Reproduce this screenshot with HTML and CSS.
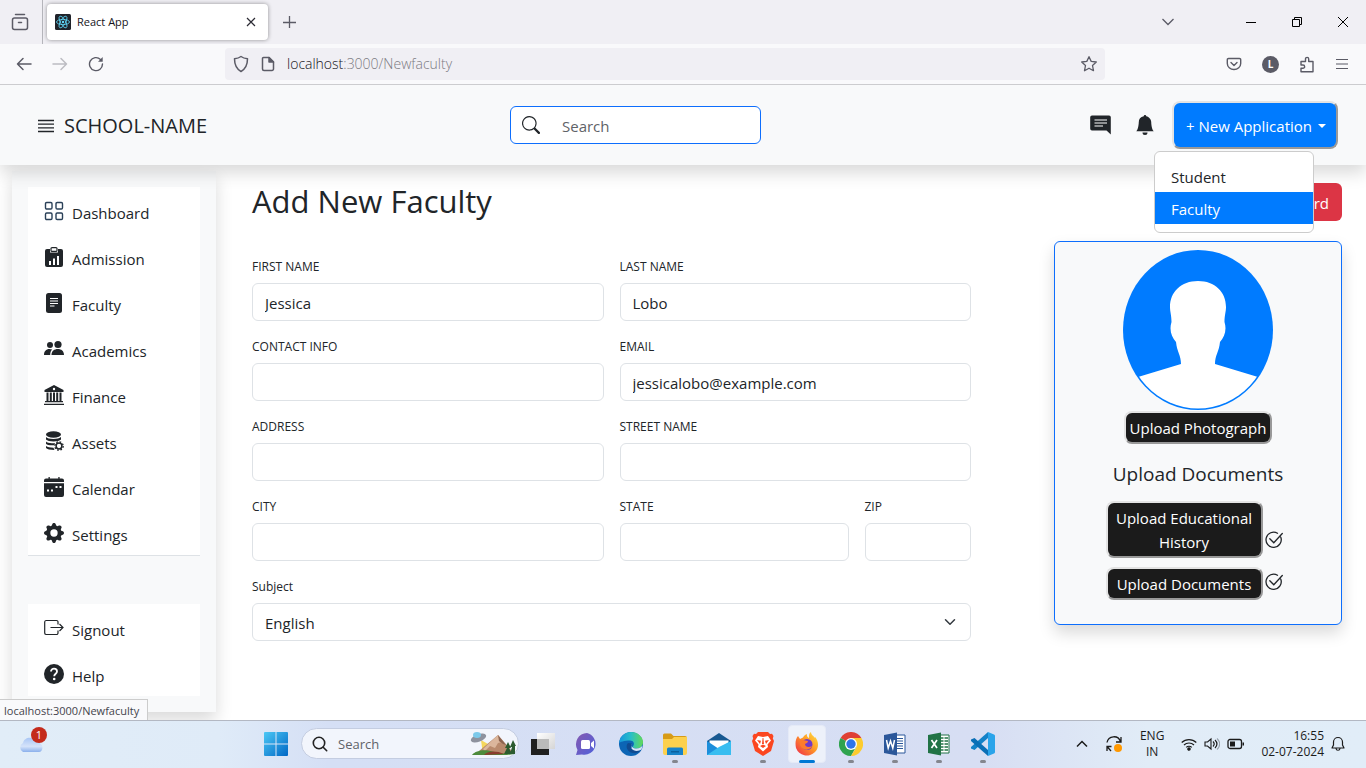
FILE: index.html
```html
<!DOCTYPE html>
<html lang="en">
<head>
<meta charset="utf-8">
<meta name="viewport" content="width=device-width, initial-scale=1">
<title>React App</title>
<link rel="stylesheet" href="styles.css">
</head>
<body>
<div class="tabbar">
  <button class="chrome-btn recent" aria-label="Recent browsing"><svg width="18" height="18" viewBox="0 0 18 18" fill="none" stroke="#5b5b66" stroke-width="1.500" stroke-linecap="round"><path d="M4.500 1.500h9"/><rect x="1.500" y="5" width="15" height="11.500" rx="2"/><path d="M7.500 9.500h3"/></svg></button>
  <div class="tab">
    <svg class="favicon" width="16" height="16" viewBox="0 0 16 16" fill="none" stroke="#61dafb" stroke-width=".8"><rect width="16" height="16" rx="1.500" fill="#20232a" stroke="none"/><ellipse cx="8" cy="8" rx="6.500" ry="2.600"/><ellipse cx="8" cy="8" rx="6.500" ry="2.600" transform="rotate(60 8 8)"/><ellipse cx="8" cy="8" rx="6.500" ry="2.600" transform="rotate(120 8 8)"/><circle cx="8" cy="8" r="1.200" fill="#61dafb" stroke="none"/></svg>
    <span class="tab-title">React App</span>
    <button class="chrome-btn tab-close" aria-label="Close tab"><svg width="10" height="10" viewBox="0 0 10 10" stroke="#2b2a33" stroke-width="1.200"><path d="M1 1l8 8M9 1l-8 8"/></svg></button>
  </div>
  <button class="chrome-btn" aria-label="New tab"><svg width="14" height="14" viewBox="0 0 14 14" stroke="#5b5b66" stroke-width="1.300"><path d="M7.500 1v12M1 7.500h13"/></svg></button>
  <div class="window-controls">
    <button class="chrome-btn list-tabs" aria-label="List all tabs"><svg width="14" height="14" viewBox="0 0 14 14" fill="none" stroke="#5b5b66" stroke-width="1.300"><path d="M1.500 4l5.500 5.500L12.500 4"/></svg></button>
    <button class="chrome-btn" aria-label="Minimize"><svg width="12" height="12" viewBox="0 0 12 12" stroke="#000"><path d="M1 6.500h10"/></svg></button>
    <button class="chrome-btn" aria-label="Restore"><svg width="12" height="12" viewBox="0 0 12 12" fill="none" stroke="#000"><path d="M1.500 3.500h7v7h-7zM3.500 3.500v-2h7v7h-2"/></svg></button>
    <button class="chrome-btn" aria-label="Close"><svg width="12" height="12" viewBox="0 0 12 12" stroke="#000"><path d="M1 1l10 10M11 1L1 11"/></svg></button>
  </div>
</div>
<div class="toolbar">
  <div class="nav-btns">
    <button class="chrome-btn" aria-label="Back"><svg width="16" height="16" viewBox="0 0 16 16" fill="none" stroke="#5b5b66" stroke-width="1.500" stroke-linecap="round" stroke-linejoin="round"><path d="M15 8H1.500M7 2.500L1.500 8 7 13.500"/></svg></button>
    <button class="chrome-btn" aria-label="Forward" disabled><svg width="16" height="16" viewBox="0 0 16 16" fill="none" stroke="#bcbcc2" stroke-width="1.500" stroke-linecap="round" stroke-linejoin="round"><path d="M1 8h13.500M9 2.500L14.500 8 9 13.500"/></svg></button>
    <button class="chrome-btn" aria-label="Reload"><svg width="16" height="16" viewBox="0 0 16 16" fill="none" stroke="#5b5b66" stroke-width="1.400" stroke-linecap="round"><path d="M14.500 8A6.500 6.500 0 1 1 12.500 3.400"/><path d="M14.700 1v4.700H10z" fill="#5b5b66" stroke="none"/></svg></button>
  </div>
  <div class="urlbar">
    <svg width="16" height="18" viewBox="0 0 16 18" fill="none" stroke="#5b5b66" stroke-width="1.500"><path d="M8 1.500c2 1.500 4 2 6.500 2.300C14.500 10 12.500 14 8 16.500 3.500 14 1.500 10 1.500 3.800 4 3.500 6 3 8 1.500z" stroke-linejoin="round"/></svg>
    <svg width="14" height="16" viewBox="0 0 14 16" fill="none" stroke="#5b5b66" stroke-width="1.500" stroke-linejoin="round"><path d="M2.500 1.500H8L12.500 6v7a1.500 1.500 0 0 1-1.500 1.500H3A1.500 1.500 0 0 1 1.500 13V2.500a1 1 0 0 1 1-1z"/><path d="M8 1.500V6h4.500z" fill="#5b5b66"/></svg>
    <span class="url">localhost<span class="url-rest">:3000/Newfaculty</span></span>
    <button class="chrome-btn star" aria-label="Bookmark"><svg width="18" height="18" viewBox="0 0 18 18" fill="none" stroke="#5b5b66" stroke-width="1.300" stroke-linejoin="round"><path d="M9 1.700l2.200 4.700 5.100.6-3.800 3.500 1 5.200L9 13.200l-4.500 2.500 1-5.200L1.700 7l5.100-.6z"/></svg></button>
  </div>
  <div class="tools">
    <button class="chrome-btn" aria-label="Save to Pocket"><svg width="16" height="16" viewBox="0 0 16 16" fill="none" stroke="#5b5b66" stroke-width="1.400" stroke-linecap="round" stroke-linejoin="round"><path d="M2.500 2.500h11a1.200 1.200 0 0 1 1.200 1.200V7.500a6.700 6 0 0 1-13.400 0V3.700a1.200 1.200 0 0 1 1.200-1.200z"/><path d="M5 6.500l3 3 3-3"/></svg></button>
    <button class="chrome-btn account" aria-label="Account">L</button>
    <button class="chrome-btn" aria-label="Extensions"><svg width="16" height="17" viewBox="0 0 16 17" fill="none" stroke="#5b5b66" stroke-width="1.400" stroke-linejoin="round"><path d="M2 5.500h4.500V3a1.600 1.600 0 0 1 3.200 0v2.500H14v10.300H2v-3.500h2a1.600 1.600 0 0 0 0-3.300H2z"/></svg></button>
    <button class="chrome-btn" aria-label="Open menu"><svg width="14" height="14" viewBox="0 0 14 14" stroke="#5b5b66" stroke-width="1.200"><path d="M1 2.500h12M1 7h12M1 11.500h12"/></svg></button>
  </div>
</div>

<div class="page">
  <header class="app-header">
    <div class="brand">
      <svg width="16" height="16" viewBox="0 0 16 16" stroke="#212529" stroke-width="1.300"><path d="M0 2.500h16M0 6.200h16M0 9.800h16M0 13.500h16"/></svg>
      <span>SCHOOL-NAME</span>
    </div>
    <label class="search">
      <svg width="18" height="18" viewBox="0 0 16 16" fill="#212529"><path d="M11.742 10.344a6.500 6.500 0 1 0-1.397 1.398h-.001c.03.040.062.078.098.115l3.850 3.850a1 1 0 0 0 1.415-1.414l-3.850-3.850a1.007 1.007 0 0 0-.115-.1zM12 6.500a5.500 5.500 0 1 1-11 0 5.500 5.500 0 0 1 11 0"/></svg>
      <input type="search" placeholder="Search" aria-label="Search">
    </label>
    <div class="actions">
      <button class="plain" aria-label="Messages"><svg width="21" height="20" viewBox="0 0 21 20"><path d="M2 .5h17A1.800 1.800 0 0 1 20.800 2.300V19.500L16.500 15.500H2A1.800 1.800 0 0 1 .2 13.700V2.300A1.800 1.800 0 0 1 2 .5z" fill="#212529"/><path d="M4.500 5h12.500M4.500 8h12.500M4.500 11h8.500" stroke="#fff" stroke-width="1.200"/></svg></button>
      <button class="plain" aria-label="Notifications"><svg width="20" height="20" viewBox="0 0 16 16" fill="#212529"><path d="M8 16a2 2 0 0 0 2-2H6a2 2 0 0 0 2 2m.995-14.901a1 1 0 1 0-1.990 0A5 5 0 0 0 3 6c0 1.098-.5 6-2 7h14c-1.500-1-2-5.902-2-7 0-2.420-1.720-4.440-4.005-4.901"/></svg></button>
      <div class="dropdown">
        <button class="new-app" aria-expanded="true">+ New Application <span class="caret"></span></button>
        <div class="menu">
          <a href="#student">Student</a>
          <a href="#faculty" class="active">Faculty</a>
        </div>
      </div>
    </div>
  </header>

  <div class="body-row">
    <nav class="sidebar">
      <div class="side-group">
        <a href="#dashboard"><svg viewBox="0 0 20 20" fill="none" stroke="#2a4058" stroke-width="1.400"><rect x="1.500" y="1.500" width="6.500" height="6.500" rx="1.200"/><rect x="12" y="1.500" width="6.500" height="6.500" rx="1.200"/><rect x="1.500" y="12" width="6.500" height="6.500" rx="1.200"/><rect x="12" y="12" width="6.500" height="6.500" rx="1.200"/></svg>Dashboard</a>
        <a href="#admission"><svg viewBox="0 0 20 20"><path d="M3 2h14a2 2 0 0 1 2 2v14a2 2 0 0 1-2 2H3a2 2 0 0 1-2-2V4a2 2 0 0 1 2-2z" fill="#212529"/><path d="M6 0h8v5.500H6z" fill="#fff"/><rect x="7" y=".6" width="6" height="3.800" rx="1" fill="#fff" stroke="#212529" stroke-width="1.200"/><path d="M5 14h2v4H5zM9 11.500h2V18H9zM13 9h2v9h-2z" fill="#fff"/></svg>Admission</a>
        <a href="#faculty"><svg viewBox="0 0 20 20"><rect x="2" width="16" height="20" rx="2.500" fill="#212529"/><path d="M6 5.500h8M6 8h8M6 10.500h8M6 13h4.500" stroke="#fff" stroke-width="1.100"/></svg>Faculty</a>
        <a href="#academics"><svg viewBox="0 0 20 20" fill="#212529"><circle cx="6" cy="6" r="3"/><circle cx="14" cy="5.500" r="3.600"/><path d="M7.500 16c0-4 2.800-6 6.300-6s6.200 2 6.200 6zM0 16c0-3.500 2-6 5.500-6 1 0 1.900.2 2.700.6C6.800 11.800 6.200 13.500 6.200 16z"/></svg>Academics</a>
        <a href="#finance"><svg viewBox="0 0 20 20" fill="#212529"><path d="M10 0l9.500 5v2H.5V5zM2.500 7.500h2V16h-2zM5.800 7.500h2V16h-2zM9 7.500h2V16H9zM12.200 7.500h2V16h-2zM15.500 7.500h2V16h-2zM1 16h18v1.300H1zM0 18.700h20V20H0z"/><circle cx="10" cy="4" r="1.200" fill="#fff"/></svg>Finance</a>
        <a href="#assets"><svg viewBox="0 0 20 20"><ellipse cx="9.500" cy="3.500" rx="7.500" ry="3.300" fill="#212529"/><path d="M2 6c1.500 2.500 13 2.500 15 0v2.500c-2 2.500-13 2.500-15 0zM2 10.500c1 1.500 5 2.100 9 1.500l-1 2.300C6 14.500 3 14 2 12.800zM2 15c1.500 1.200 4 1.700 7.500 1.700l1 2.300C6 19 3 18.300 2 17z" fill="#212529"/><circle cx="15" cy="15" r="2.900" fill="#fff" stroke="#212529" stroke-width="1.500"/><circle cx="15" cy="15" r="4.200" fill="none" stroke="#212529" stroke-width="1.300" stroke-dasharray="1.700 1.600"/></svg>Assets</a>
        <a href="#calendar"><svg viewBox="0 0 20 20"><path d="M2 1.500h2.500V0h1.300v1.500h8.500V0h1.300v1.500H18a2 2 0 0 1 2 2V5H0V3.500a2 2 0 0 1 2-2zM0 6.200h20V18a2 2 0 0 1-2 2H2a2 2 0 0 1-2-2z" fill="#212529"/><path d="M3 12.500h2v2H3zM7 12.500h2v2H7zM11.500 9h2v2h-2zM15.500 9h2v2h-2z" fill="#fff"/></svg>Calendar</a>
        <a href="#settings"><svg viewBox="0 0 16 16" fill="#212529"><path d="M9.405 1.050c-.413-1.400-2.397-1.400-2.810 0l-.1.340a1.464 1.464 0 0 1-2.105.872l-.31-.17c-1.283-.698-2.686.705-1.987 1.987l.169.311c.446.820.023 1.841-.872 2.105l-.34.100c-1.400.413-1.400 2.397 0 2.810l.34.100a1.464 1.464 0 0 1 .872 2.105l-.17.310c-.698 1.283.705 2.686 1.987 1.987l.311-.169a1.464 1.464 0 0 1 2.105.872l.1.340c.413 1.400 2.397 1.400 2.810 0l.1-.34a1.464 1.464 0 0 1 2.105-.872l.31.170c1.283.698 2.686-.705 1.987-1.987l-.169-.311a1.464 1.464 0 0 1 .872-2.105l.34-.1c1.400-.413 1.400-2.397 0-2.810l-.34-.1a1.464 1.464 0 0 1-.872-2.105l.17-.31c.698-1.283-.705-2.686-1.987-1.987l-.311.169a1.464 1.464 0 0 1-2.105-.872zM8 10.930a2.929 2.929 0 1 1 0-5.860 2.929 2.929 0 0 1 0 5.860"/></svg>Settings</a>
      </div>
      <div class="side-group">
        <a href="#signout"><svg viewBox="0 0 20 20" fill="none" stroke="#212529" stroke-width="1.200"><path d="M14 6.500V4a1.500 1.500 0 0 0-1.500-1.500H2A1.500 1.500 0 0 0 .7 4v11A1.500 1.500 0 0 0 2 16.500h10.500A1.500 1.500 0 0 0 14 15v-2.500M6.500 9.500h12.500M15.500 6l3.500 3.500-3.500 3.500"/></svg>Signout</a>
        <a href="#help"><svg viewBox="0 0 20 20"><circle cx="10" cy="10" r="10" fill="#212529"/><path d="M7 7.500C7 3.700 13 3.700 13 7.500c0 2.200-2.800 2.300-2.800 4.700" fill="none" stroke="#fff" stroke-width="1.800"/><circle cx="10.200" cy="15" r="1.300" fill="#fff"/></svg>Help</a>
      </div>
    </nav>

    <main class="main">
      <div class="title-row">
        <h1>Add New Faculty</h1>
        <button class="danger">Dashboard</button>
      </div>
      <div class="columns">
        <form class="form">
          <div class="field half"><label for="first">FIRST NAME</label><input id="first" type="text" value="Jessica"></div>
          <div class="field half"><label for="last">LAST NAME</label><input id="last" type="text" value="Lobo"></div>
          <div class="field half"><label for="contact">CONTACT INFO</label><input id="contact" type="text"></div>
          <div class="field half"><label for="email">EMAIL</label><input id="email" type="email" value="jessicalobo@example.com"></div>
          <div class="field half"><label for="address">ADDRESS</label><input id="address" type="text"></div>
          <div class="field half"><label for="street">STREET NAME</label><input id="street" type="text"></div>
          <div class="field half"><label for="city">CITY</label><input id="city" type="text"></div>
          <div class="field third"><label for="state">STATE</label><input id="state" type="text"></div>
          <div class="field sixth"><label for="zip">ZIP</label><input id="zip" type="text"></div>
          <div class="field full"><label for="subject">Subject</label>
            <div class="select"><select id="subject"><option>English</option></select><svg width="12" height="12" viewBox="0 0 16 16" fill="none" stroke="#343a40" stroke-width="2" stroke-linecap="round" stroke-linejoin="round"><path d="M2 5l6 6 6-6"/></svg></div>
          </div>
        </form>
        <aside class="card">
          <svg class="avatar" width="150" height="160" viewBox="0 0 150 160"><defs><clipPath id="oval"><ellipse cx="75" cy="80" rx="73.500" ry="78.500"/></clipPath></defs><ellipse cx="75" cy="80" rx="75" ry="80" fill="#007bff"/><path clip-path="url(#oval)" fill="#fff" d="M75 31c17 0 28 11 28 26 0 5-1.500 8-1.500 15 2.500 8 0 15-4.500 20-1 10-5 13-5 22l43 13v40H15v-40l43-13c0-9-4-12-5-22-4.500-5-7-12-4.500-20 0-7-1.500-10-1.500-15 0-15 11-26 28-26z"/></svg>
          <button class="dark">Upload Photograph</button>
          <h2>Upload Documents</h2>
          <div class="docs">
            <div class="doc"><button class="dark">Upload Educational History</button><svg width="18" height="18" viewBox="0 0 18 18" fill="none" stroke="#212529" stroke-width="1.300" stroke-linecap="round"><path d="M15.800 6.200A7.600 7.600 0 1 1 12.500 2.200M4.800 7.800l4 4L17.300 2.500"/></svg></div>
            <div class="doc"><button class="dark">Upload Documents</button><svg width="18" height="18" viewBox="0 0 18 18" fill="none" stroke="#212529" stroke-width="1.300" stroke-linecap="round"><path d="M15.800 6.200A7.600 7.600 0 1 1 12.500 2.200M4.800 7.800l4 4L17.300 2.500"/></svg></div>
          </div>
        </aside>
      </div>
    </main>
  </div>
  <div class="status">localhost:3000/Newfaculty</div>
</div>

<footer class="taskbar">
  <button class="weather" aria-label="Weather"><svg width="30" height="28" viewBox="0 0 30 28"><defs><linearGradient id="cl" x1="0" y1="0" x2="0" y2="1"><stop offset="0" stop-color="#a9c6f5"/><stop offset=".6" stop-color="#d5e3fa"/><stop offset="1" stop-color="#8bb0ec"/></linearGradient></defs><path d="M5 22a5 5 0 0 1 0-9C6 8 13 6 16 10c4-1 6 1 6.500 4 3 1 2.500 8-1.500 8z" fill="url(#cl)"/></svg><span class="badge">1</span></button>
  <div class="apps">
    <button class="app" aria-label="Start"><svg width="24" height="24" viewBox="0 0 24 24"><defs><linearGradient id="wn" x1="0" y1="0" x2="1" y2="1"><stop offset="0" stop-color="#4cc8f5"/><stop offset="1" stop-color="#0067c5"/></linearGradient></defs><path fill="url(#wn)" d="M0 1a1 1 0 0 1 1-1h10.500v11.500H0zM12.500 0H23a1 1 0 0 1 1 1v10.500H12.500zM0 12.500h11.500V24H1a1 1 0 0 1-1-1zM12.500 12.500H24V23a1 1 0 0 1-1 1H12.500z"/></svg></button>
    <label class="os-search">
      <svg width="16" height="16" viewBox="0 0 16 16" fill="none" stroke="#222" stroke-width="1.600" stroke-linecap="round"><circle cx="7" cy="7" r="5.700"/><path d="M11.200 11.200l3.500 3.500"/></svg>
      <input type="text" placeholder="Search" aria-label="Search Windows">
      <svg width="46" height="26" viewBox="0 0 46 26"><path d="M11 9l2 15 12-7z" fill="#f5d75c"/><path d="M9 20l19-16 13 15v4H12z" fill="#b98a6d"/><path d="M28 4l4 7-4 1-3 5-5-2-5 5-2-2z" fill="#dbb69c"/><path d="M28 4l8 10-3-1-4-3z" fill="#8c6450"/><path d="M2 24c4-5 14-6 22-3l20 3z" fill="#4d8a3b"/><path d="M14 24c3-4 12-5 20-1z" fill="#8a3d2e"/><ellipse cx="8.500" cy="7" rx="8" ry="3.700" fill="#8e929e" transform="rotate(-20 8.500 7)"/><ellipse cx="7" cy="4" rx="4" ry="3" fill="#7cc9ea"/><path d="M38 11l3 6h-2l3 6h-8l3-6h-2zM43 9l3 6h-1v8h-5l2-7h-2z" fill="#2c5b2f"/></svg>
    </label>
    <button class="app" aria-label="Task view"><svg width="24" height="24" viewBox="0 0 24 24"><defs><linearGradient id="tv" x1="0" y1="0" x2="1" y2="1"><stop offset="0" stop-color="#fff"/><stop offset="1" stop-color="#d5d5d5"/></linearGradient></defs><rect y="7" width="18" height="16" fill="#202020"/><rect x="6" y="1" width="18" height="16" fill="url(#tv)"/><rect x="6" y="7" width="12" height="10" fill="#bababa"/></svg></button>
    <button class="app" aria-label="Chat"><svg width="24" height="24" viewBox="0 0 24 24"><defs><linearGradient id="ch" x1="0" y1="0" x2="1" y2="1"><stop offset="0" stop-color="#8559b0"/><stop offset="1" stop-color="#4f61dc"/></linearGradient></defs><path d="M12 1a11 11 0 1 1-5 21.500l-6 .5 1.500-5A11.300 11.300 0 0 1 12 1z" fill="url(#ch)"/><rect x="6" y="8" width="9" height="9" rx="1.500" fill="#fff"/><path d="M16 11l3-2.500v8L16 14z" fill="#fff"/></svg></button>
    <button class="app" aria-label="Edge"><svg width="24" height="24" viewBox="0 0 24 24"><defs><linearGradient id="ed" x1="0" y1="0" x2="1" y2="0"><stop offset="0" stop-color="#1595dd"/><stop offset=".5" stop-color="#29bfc7"/><stop offset="1" stop-color="#62d957"/></linearGradient></defs><circle cx="12" cy="12" r="12" fill="#0c65b5"/><path d="M0 11C1 4 6 0 12 0c7 0 12 5 12 10 0 4-3 6.500-6.500 6.500-3 0-4.500-1.500-3-3 1-1.500.5-5-3.500-5C5 8.500 1 10 0 11z" fill="url(#ed)"/><path d="M9 11c-3 3-1 9 5 10 3 .5 6-.5 8-3-3 1-7 1-9-2-1-1.500-1-3 0-4.500" fill="#104b91"/><path d="M13 11.500c-1 3 1 5 4.500 5 3 0 5-1.500 6-3l-1 4c-3 2-8 2-10-1z" fill="#d7e3f6"/></svg></button>
    <button class="app open" aria-label="File Explorer"><svg width="24" height="24" viewBox="0 0 24 24"><path d="M0 3a1.500 1.500 0 0 1 1.500-1.500H8L10.500 4H22a2 2 0 0 1 2 2v4H0z" fill="#d79b16"/><path d="M0 7h9l2-2h13v16a2 2 0 0 1-2 2H2a2 2 0 0 1-2-2z" fill="#fcd04d"/><path d="M4 23v-6a1.500 1.500 0 0 1 1.500-1.500h13A1.500 1.500 0 0 1 20 17v6z" fill="#1682c9"/><path d="M8 19h8v1.500H8z" fill="#0b609e"/></svg></button>
    <button class="app" aria-label="Mail"><svg width="24" height="24" viewBox="0 0 24 24"><path d="M0 9L12 1l12 8v5H0z" fill="#175891"/><path d="M2.500 8.500h19v6l-9.500 5-9.500-5z" fill="#fff"/><path d="M0 9l12 8 12-8v14H0z" fill="#1c8edb"/><path d="M0 23l12-8 12-6v14z" fill="#38bdf0"/></svg></button>
    <button class="app open" aria-label="Brave"><svg width="22" height="24" viewBox="0 0 22 24"><path d="M6 0h10l2 2 2-.3L21.500 4l-.7 2.500L22 9l-3 10-8 5-8-5L0 9l1.200-2.500L.5 4 2 1.700 4 2z" fill="#fb4620"/><path d="M6 4l5 1 5-1 3 4.500-3.500 4 .5 2.500-5 4.500-5-4.500.5-2.500L3 8.500z" fill="#fff"/><path d="M5 8l4 .8L8 12zM17 8l-4 .8 1 3.200zM8 14l3-1.500 3 1.500-3 2zM10.600 6h.8l.6 6h-2z" fill="#fb4620"/></svg></button>
    <button class="app open current" aria-label="Firefox"><svg width="24" height="24" viewBox="0 0 24 24"><defs><linearGradient id="ff" x1="1" y1="0" x2="0" y2="1"><stop offset="0" stop-color="#ffe744"/><stop offset=".45" stop-color="#ff9a25"/><stop offset="1" stop-color="#ee254c"/></linearGradient></defs><path d="M3 4l2 3 3-1.500c1-2 2.500-3 4-3.500-.5 2 .5 3 2 4 0-3 0-5 2-6 0 3 3 4 4 6l.3-1C24 10 24 16 20 20a11.500 11.500 0 0 1-19-4C0 11 .5 7 3 4z" fill="url(#ff)"/><circle cx="12" cy="12.500" r="5.500" fill="#7139c9"/><path d="M5 9c4-2 5 0 8 0 0 2-2 2-3 3 0 3 4 4 7 2-1 4-9 6-12-1z" fill="#ff7b2c"/></svg></button>
    <button class="app open" aria-label="Chrome"><svg width="24" height="24" viewBox="0 0 24 24"><path d="M12 12L1.600 6A12 12 0 0 1 22.400 6z" fill="#df4034"/><path d="M12 12L1.600 6A12 12 0 0 0 12 24l5-9z" fill="#2fa34f"/><path d="M12 6h10.400A12 12 0 0 1 12 24l5.500-9z" fill="#fdcc2e"/><circle cx="12" cy="12" r="6" fill="#fff"/><circle cx="12" cy="12" r="4.700" fill="#2f75e8"/></svg></button>
    <button class="app open" aria-label="Word"><svg width="24" height="24" viewBox="0 0 24 24"><path d="M12 3h10v18H12z" fill="#fff" stroke="#2b579a"/><path d="M14 6.500h6M14 9h6M14 11.500h6M14 14h6M14 16.500h6" stroke="#2b579a"/><path d="M1 3l13-2.500v23L1 21z" fill="#2b579a"/><path d="M3.500 8l1.700 8L7.500 9l2.300 7 1.700-8" fill="none" stroke="#fff" stroke-width="1.500"/></svg></button>
    <button class="app open" aria-label="Excel"><svg width="24" height="24" viewBox="0 0 24 24"><path d="M12 3h10v18H12z" fill="#fff" stroke="#217346"/><path d="M14 6h7M14 9h7M14 12h7M14 15h7M14 18h7" stroke="#217346" stroke-width="1.500"/><path d="M17 4v16" stroke="#fff"/><path d="M1 3l13-2.500v23L1 21z" fill="#217346"/><path d="M4.500 8l5.500 8M10 8l-5.500 8" stroke="#fff" stroke-width="1.700"/></svg></button>
    <button class="app open" aria-label="Visual Studio Code"><svg width="24" height="24" viewBox="0 0 24 24"><path d="M17 0v6L3.500 18 0 16.500V15z" fill="#1482c8"/><path d="M17 24v-6L3.500 6 0 7.500V9z" fill="#0b6fb6"/><path d="M17 0l6 2.500a1.500 1.500 0 0 1 1 1.400v16.200a1.500 1.500 0 0 1-1 1.400L17 24z" fill="#2aa4ea"/></svg></button>
  </div>
  <div class="tray">
    <button class="chrome-btn" aria-label="Show hidden icons"><svg width="12" height="12" viewBox="0 0 12 12" fill="none" stroke="#1b1b1b" stroke-width="1.500"><path d="M1 8.500l5-5 5 5"/></svg></button>
    <button class="chrome-btn" aria-label="Updates"><svg width="18" height="18" viewBox="0 0 18 18" fill="none" stroke="#1b1b1b" stroke-width="1.300"><path d="M2 7.500A7 7 0 0 1 15.500 6.500M16 2v5h-5M2 16v-4.500h4.500M2 11.500l4 4.500"/><circle cx="13" cy="13" r="4" fill="#ff9800" stroke="none"/></svg></button>
    <span class="lang">ENG<br>IN</span>
    <button class="chrome-btn" aria-label="Wi-Fi"><svg width="16" height="14" viewBox="0 0 16 14" fill="none" stroke="#1b1b1b" stroke-width="1.200"><path d="M.7 5.500a10.500 10.500 0 0 1 14.600 0M3 8a7.200 7.200 0 0 1 10 0M5.200 10.400a4 4 0 0 1 5.600 0"/><circle cx="8" cy="12" r="1.200" fill="#1b1b1b"/></svg></button>
    <button class="chrome-btn" aria-label="Volume"><svg width="16" height="14" viewBox="0 0 16 14" fill="none" stroke="#1b1b1b" stroke-width="1.100"><path d="M1 5h2.500L7 2v10L3.500 9H1zM9 4.500c1.500 1.500 1.500 3.500 0 5M11 3c2.500 2.500 2.500 5.500 0 8"/><path d="M13 1.500c3.500 3.500 3.500 7.500 0 11" stroke="#9aa3ad"/></svg></button>
    <button class="chrome-btn" aria-label="Battery"><svg width="18" height="12" viewBox="0 0 18 12"><rect x="1" y="1.500" width="13.500" height="9" rx="2" fill="none" stroke="#1b1b1b" stroke-width="1.300"/><path d="M3 3.500h5v5H3zM15.500 4.500H17v3h-1.500z" fill="#1b1b1b"/></svg></button>
    <span class="clock">16:55<br>02-07-2024</span>
    <button class="chrome-btn" aria-label="Notifications"><svg width="14" height="16" viewBox="0 0 14 16" fill="none" stroke="#1b1b1b" stroke-width="1.200" stroke-linejoin="round"><path d="M2.500 9V6a4.500 4.500 0 0 1 9 0v3l1.500 3H1zM5 12.500c.3 2.300 3.700 2.300 4 0"/></svg></button>
  </div>
</footer>
</body>
</html>
```
FILE: styles.css
```css
* { box-sizing: border-box; }
body {
  margin: 0;
  min-height: 100vh;
  display: flex;
  flex-direction: column;
  background: #fff;
  color: #212529;
  font: 15px/24px "Open Sans", "Noto Sans", sans-serif;
}
button, input, select { font: inherit; color: inherit; }
button { cursor: pointer; }
svg { display: block; flex: none; }
a { color: inherit; text-decoration: none; }

/* browser chrome */
.chrome-btn {
  display: flex;
  align-items: center;
  justify-content: center;
  padding: 0;
  border: 0;
  background: none;
}
.tabbar { display: flex; align-items: center; height: 44px; background: #f0eff4; }
.recent { width: 43px; height: 44px; padding-right: 3px; border-right: 1px solid #b5b5bb; }
.tab {
  display: flex;
  align-items: center;
  gap: 6px;
  width: 221px;
  height: 36px;
  margin: 0 14px 0 4px;
  padding: 0 12px 0 8px;
  border-radius: 4px;
  background: #fff;
  box-shadow: 0 0 4px rgba(0, 0, 0, .4);
  font-size: 11px;
  color: #15141a;
}
.tab-close { margin-left: auto; }
.window-controls { display: flex; align-items: center; gap: 34px; margin-left: auto; padding-right: 17px; }
.list-tabs { margin-right: 36px; }
.toolbar {
  display: flex;
  align-items: center;
  height: 41px;
  background: #f9f9fb;
  border-bottom: 1px solid #cccccf;
}
.nav-btns { display: flex; gap: 20px; flex: 0 0 225px; padding-left: 16px; }
.urlbar {
  display: flex;
  align-items: center;
  gap: 12px;
  flex: 1;
  height: 32px;
  padding: 0 7px 0 8px;
  border-radius: 4px;
  background: #f0eff4;
}
.url { font-size: 14px; color: #15141a; font-weight: 300; }
.url-rest { color: #7c7b83; }
.star { margin-left: auto; }
.tools { display: flex; align-items: center; gap: 20px; padding: 0 17px 0 121px; }
.account {
  width: 17px;
  height: 17px;
  border-radius: 50%;
  background: #5b5b66;
  color: #fff;
  font-size: 10px;
  font-weight: 700;
}

/* application header */
.page { position: relative; flex: 1; display: flex; flex-direction: column; overflow: hidden; }
.app-header {
  position: relative;
  z-index: 2;
  display: grid;
  grid-template-columns: minmax(0, 472fr) minmax(0, 251fr) minmax(0, 577fr);
  align-items: center;
  min-height: 80px;
  padding: 0 28px 0 38px;
  background: #f8f9fa;
  box-shadow: 0 8px 16px rgba(0, 0, 0, .15);
}
.brand { display: flex; align-items: center; gap: 10px; padding-top: 2px; font-size: 20px; }
.search {
  display: flex;
  align-items: center;
  height: 38px;
  padding: 0 11px;
  border: 1px solid #0d6efd;
  border-radius: 6px;
  background: #fff;
}
.search input {
  flex: 1;
  min-width: 0;
  margin-left: 22px;
  padding: 2px 0 0;
  border: 0;
  outline: 0;
  background: none;
}
.search input::placeholder { color: #5f6368; }
.actions { display: flex; align-items: center; justify-content: flex-end; gap: 24px; }
.plain { padding: 0; border: 0; background: none; }
.dropdown { position: relative; margin-left: -7px; }
.new-app {
  display: flex;
  align-items: center;
  gap: 4px;
  height: 48px;
  padding: 2px 10px 0 12px;
  border: 2px solid;
  border-color: #e3e3e3 #999 #999 #e3e3e3;
  border-radius: 8px;
  background: #007bff;
  color: #fff;
}
.new-app .caret { margin-left: 2px; }
.caret { border: 4px solid transparent; border-top-color: #fff; border-bottom: 0; }
.menu {
  position: absolute;
  top: 50px;
  right: 24px;
  width: 160px;
  padding: 8px 0;
  border: 1px solid #ccc;
  border-radius: 6px;
  background: #fff;
}
.menu a { display: block; padding: 5px 16px 3px; }
.menu .active { background: #007bff; color: #fff; }

/* sidebar */
.body-row { display: flex; flex: 1; align-items: flex-start; padding: 6px 24px 8px 12px; }
.sidebar {
  flex: 0 0 204px;
  padding: 16px;
  background: #f8f9fa;
  box-shadow: 0 8px 16px rgba(0, 0, 0, .15);
}
.side-group { background: #fff; }
.side-group:first-child { margin-bottom: 48px; border-bottom: 1px solid #dee2e6; }
.side-group a { display: flex; align-items: center; gap: 8px; height: 46px; padding: 6px 16px 0; }
.side-group svg { width: 20px; height: 20px; margin-bottom: 4px; }

/* faculty form */
.main { flex: 1; min-width: 0; padding: 12px 0 0 36px; }
.title-row { display: flex; align-items: center; justify-content: space-between; }
h1 { margin: 0; padding-bottom: 2px; font-size: 31px; line-height: 36px; font-weight: 400; }
.danger { height: 38px; padding: 2px 13px 0; border: 0; border-radius: 6px; background: #dc3545; color: #fff; }
.columns {
  display: grid;
  grid-template-columns: 719fr 288fr;
  column-gap: 83px;
  align-items: start;
  padding-top: 20px;
}
.form { display: grid; grid-template-columns: repeat(12, minmax(0, 1fr)); gap: 16px; padding-top: 16px; }
.half { grid-column: span 6; }
.third { grid-column: span 4; }
.sixth { grid-column: span 2; }
.full { grid-column: span 12; }
.field label { display: block; margin-bottom: 6px; font-size: 12px; line-height: 20px; }
.field input, .field select {
  display: block;
  width: 100%;
  height: 38px;
  padding: 2px 12px 0;
  border: 1px solid #dee2e6;
  border-radius: 6px;
  background: #fff;
}
.select { position: relative; }
.select select { appearance: none; }
.select svg { position: absolute; right: 15px; top: 13px; pointer-events: none; }

/* upload card */
.card {
  display: flex;
  flex-direction: column;
  align-items: center;
  padding: 8px 8px 24px;
  border: 1px solid #0d6efd;
  border-radius: 6px;
  background: #f8f9fa;
  box-shadow: 0 8px 16px rgba(0, 0, 0, .15);
}
.dark {
  padding: 3px 4px 2px;
  border: 2px solid;
  border-color: #e3e3e3 #999 #999 #e3e3e3;
  border-radius: 8px;
  background: #1b1b1b;
  color: #fff;
}
.avatar { margin-bottom: 1px; }
h2 { margin: 18px 0 15px; font-size: 19px; line-height: 24px; font-weight: 400; }
.docs { display: flex; flex-direction: column; gap: 9px; padding-right: 8px; }
.doc { display: flex; align-items: flex-end; gap: 2px; }
.doc .dark { width: 157px; }
.doc svg { margin-bottom: 9px; }

.status {
  position: absolute;
  left: 0;
  bottom: 0;
  z-index: 3;
  padding: 2px 8px 0 4px;
  border: 1px solid #ccc;
  border-width: 1px 1px 0 0;
  background: #f9f9fb;
  color: #45444c;
  font-size: 11px;
  line-height: 18px;
}

/* desktop taskbar */
.taskbar {
  display: flex;
  align-items: center;
  height: 48px;
  padding-bottom: 2px;
  border-top: 1px solid #b3b8c3;
  background: linear-gradient(90deg, #e1edf8 0, #dfebf8 16%, #d5dff5 24%, #d7def3 72%, #e1ecf7 84%, #e1edf8);
}
.weather { position: relative; flex: 0 0 254px; padding: 0 0 0 18px; border: 0; background: none; }
.badge {
  position: absolute;
  left: 31px;
  top: -3px;
  width: 16px;
  height: 16px;
  border-radius: 50%;
  background: #c42b1c;
  color: #fff;
  font-size: 11px;
  line-height: 16px;
}
.apps { display: flex; align-items: center; }
.app {
  position: relative;
  display: flex;
  align-items: center;
  justify-content: center;
  width: 38px;
  height: 38px;
  margin: 0 3px;
  padding: 0;
  border: 1px solid transparent;
  border-radius: 4px;
  background: none;
}
.current { background: #edf1fa; border-color: #e5eaf7; }
.open::after {
  content: "";
  position: absolute;
  bottom: -1px;
  width: 6px;
  height: 3px;
  border-radius: 2px;
  background: #84868e;
}
.current::after { width: 16px; background: #0078d4; }
.os-search {
  display: flex;
  align-items: center;
  gap: 10px;
  width: 218px;
  height: 31px;
  margin: 0 2px;
  padding: 0 2px 0 10px;
  border: 1px solid #c4cde1;
  border-radius: 16px;
  background: #f2f5fc;
}
.os-search { margin-left: 3px; }
.os-search input { flex: 1; min-width: 0; padding: 0; border: 0; outline: 0; background: none; font-size: 13px; }
.os-search input::placeholder { color: #606369; }
.tray {
  display: flex;
  align-items: center;
  gap: 7px;
  margin-left: auto;
  padding-right: 21px;
  color: #1b1b1b;
  font-size: 12px;
  line-height: 16px;
}
.tray .chrome-btn:first-child { margin-right: 10px; }
.lang { margin: 0 10px; text-align: center; }
.clock { margin-left: 9px; text-align: right; }
```
